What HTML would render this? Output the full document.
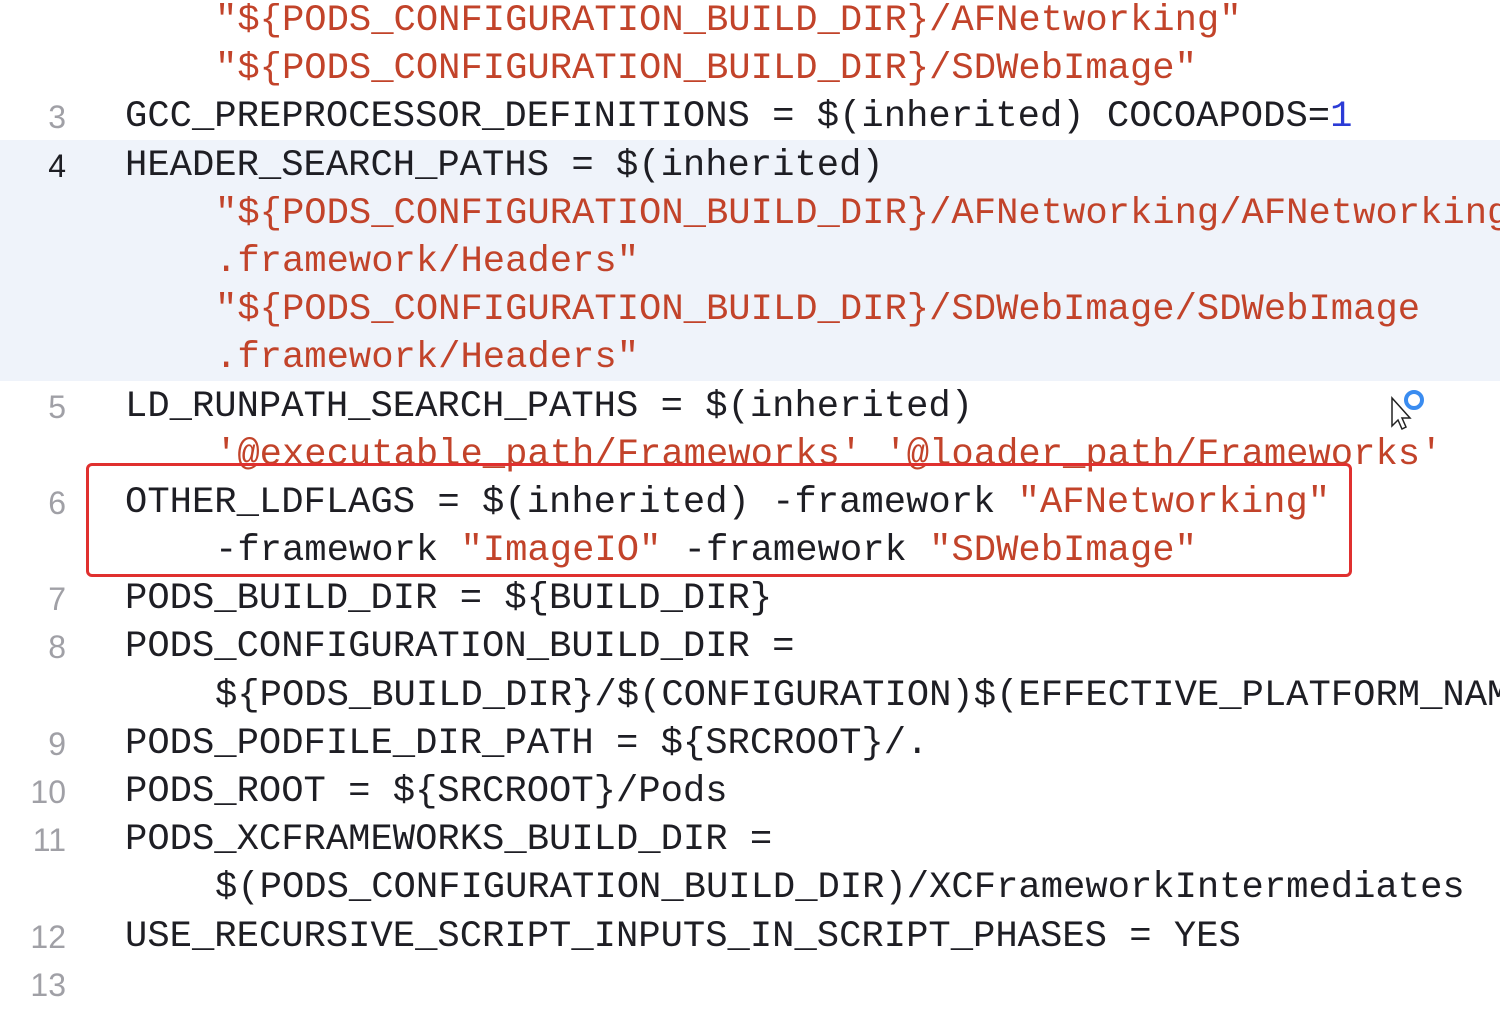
<!DOCTYPE html>
<html><head><meta charset="utf-8"><style>
html,body{margin:0;padding:0;width:1500px;height:995px;overflow:hidden;background:#fff;}
.hl{position:absolute;left:0;top:140px;width:1500px;height:241px;background:#eff3fa;}
.code{position:absolute;left:0;top:-3px;width:1500px;font-family:"Liberation Mono",monospace;font-size:37.2px;line-height:48.2px;color:#1e1e24;}
.l{height:48.2px;position:relative;white-space:pre;}
.n{position:absolute;left:6px;color:#a0a0a6;font-family:"Liberation Sans",sans-serif;font-size:32px;width:60px;text-align:right;}
.n.cur{color:#1e1e24;}
.t{position:absolute;left:125px;}
.c{position:absolute;left:215px;}
.s{color:#c2432a;}
.b{color:#2b3bd6;}
.box{position:absolute;left:86px;top:463px;width:1260px;height:108px;border:3px solid #e0302f;border-radius:6px;}
</style></head><body>
<div class="hl"></div>
<div class="code"><div class="l"><span class="c s">"${PODS_CONFIGURATION_BUILD_DIR}/AFNetworking"</span></div><div class="l"><span class="c s">"${PODS_CONFIGURATION_BUILD_DIR}/SDWebImage"</span></div><div class="l"><span class="n">3</span><span class="t">GCC_PREPROCESSOR_DEFINITIONS = $(inherited) COCOAPODS=<span class="b">1</span></span></div><div class="l"><span class="n cur">4</span><span class="t">HEADER_SEARCH_PATHS = $(inherited)</span></div><div class="l"><span class="c s">"${PODS_CONFIGURATION_BUILD_DIR}/AFNetworking/AFNetworking</span></div><div class="l"><span class="c s">.framework/Headers"</span></div><div class="l"><span class="c s">"${PODS_CONFIGURATION_BUILD_DIR}/SDWebImage/SDWebImage</span></div><div class="l"><span class="c s">.framework/Headers"</span></div><div class="l"><span class="n">5</span><span class="t">LD_RUNPATH_SEARCH_PATHS = $(inherited)</span></div><div class="l"><span class="c s">'@executable_path/Frameworks' '@loader_path/Frameworks'</span></div><div class="l"><span class="n">6</span><span class="t">OTHER_LDFLAGS = $(inherited) -framework <span class="s">"AFNetworking"</span></span></div><div class="l"><span class="c">-framework <span class="s">"ImageIO"</span> -framework <span class="s">"SDWebImage"</span></span></div><div class="l"><span class="n">7</span><span class="t">PODS_BUILD_DIR = ${BUILD_DIR}</span></div><div class="l"><span class="n">8</span><span class="t">PODS_CONFIGURATION_BUILD_DIR =</span></div><div class="l"><span class="c">${PODS_BUILD_DIR}/$(CONFIGURATION)$(EFFECTIVE_PLATFORM_NAME)</span></div><div class="l"><span class="n">9</span><span class="t">PODS_PODFILE_DIR_PATH = ${SRCROOT}/.</span></div><div class="l"><span class="n">10</span><span class="t">PODS_ROOT = ${SRCROOT}/Pods</span></div><div class="l"><span class="n">11</span><span class="t">PODS_XCFRAMEWORKS_BUILD_DIR =</span></div><div class="l"><span class="c">$(PODS_CONFIGURATION_BUILD_DIR)/XCFrameworkIntermediates</span></div><div class="l"><span class="n">12</span><span class="t">USE_RECURSIVE_SCRIPT_INPUTS_IN_SCRIPT_PHASES = YES</span></div><div class="l"><span class="n">13</span></div></div>
<div class="box"></div>
<svg style="position:absolute;left:1388px;top:388px" width="42" height="44" viewBox="0 0 42 44">
<path d="M4 10 L4 38 L10 32 L14 41 L18 39 L14 30 L22 30 Z" fill="#fff" stroke="#222" stroke-width="1.5"/>
<circle cx="26" cy="12" r="8" fill="none" stroke="#3a8cf0" stroke-width="4"/>
</svg>
</body></html>
